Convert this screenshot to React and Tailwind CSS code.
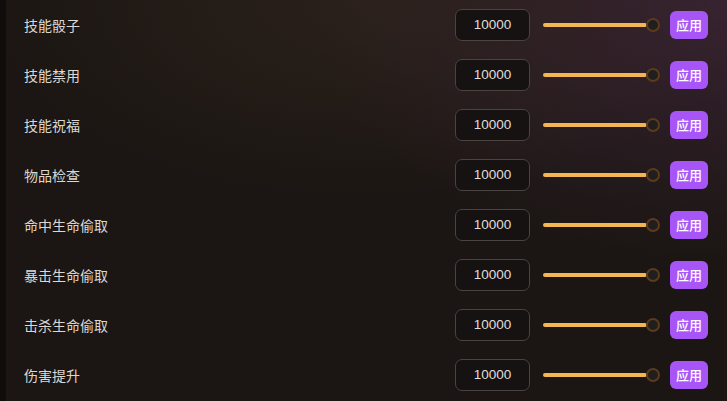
import React from "react";

const rows = ["技能骰子", "技能禁用", "技能祝福", "物品检查", "命中生命偷取", "暴击生命偷取", "击杀生命偷取", "伤害提升"];

export default function App() {
  return (
    <div className="relative w-[727px] h-[401px] overflow-hidden bg-[#1b1613] flex" style={{ fontFamily: '"Liberation Sans", "Noto Sans CJK SC", sans-serif' }}>
      <div className="absolute inset-0 bg-[radial-gradient(ellipse_420px_260px_at_100%_0%,rgba(80,45,75,0.55),transparent)]" />
      <div className="absolute inset-0 bg-[radial-gradient(ellipse_380px_200px_at_50%_0%,rgba(60,45,35,0.45),transparent)]" />
      <div className="w-[6px] h-full bg-[#110d0b] relative z-10" />
      <div className="relative z-10 flex-1 flex flex-col">
        {rows.map((r) => (
          <div key={r} className="h-[50px] shrink-0 flex items-center pl-[18px] pr-[19px]">
            <span className="flex-1 text-[14px] text-[#dcd7d2]" style={{ fontFamily: '"Noto Sans CJK SC", sans-serif' }}>{r}</span>
            <div className="w-[75px] h-[32px] rounded-[7px] border border-[#4a4340] bg-[#151211] flex items-center justify-center text-[13.5px] text-[#e2deda]">10000</div>
            <div className="ml-[13px] w-[117px] flex items-center">
              <div className="flex-1 h-[4px] rounded-full bg-[#f4b650]" />
              <div className="w-[14px] h-[14px] rounded-full border-2 border-[#5c3a1c] bg-[#211f1e] -ml-[1px]" />
            </div>
            <div className="ml-[10px] w-[38px] h-[28px] rounded-[6px] bg-[#a855f7] flex items-center justify-center text-[13px] font-medium text-white" style={{ fontFamily: '"Noto Sans CJK SC", sans-serif' }}>应用</div>
          </div>
        ))}
      </div>
    </div>
  );
}
